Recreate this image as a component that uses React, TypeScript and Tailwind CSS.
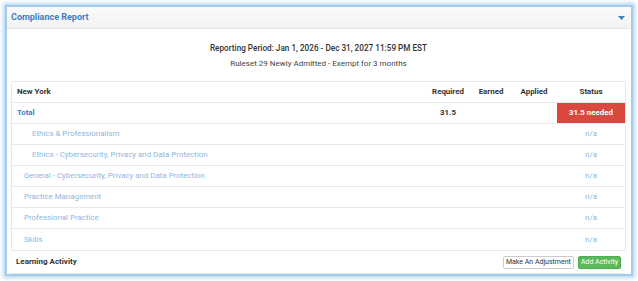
import React from "react";

const rows = [
  { name: "Ethics & Professionalism", indent: 2 },
  { name: "Ethics - Cybersecurity, Privacy and Data Protection", indent: 2 },
  { name: "General - Cybersecurity, Privacy and Data Protection", indent: 1 },
  { name: "Practice Management", indent: 1 },
  { name: "Professional Practice", indent: 1 },
  { name: "Skills", indent: 1 },
];

export default function App() {
  return (
    <div
      className="w-[638px] h-[281px] bg-white p-[5px] overflow-hidden"
      style={{ fontFamily: "Roboto, 'Liberation Sans', sans-serif" }}
    >
      <div className="h-[271px] border-2 border-[#a3cce9] shadow-[0_0_4px_2px_#b7d8ef] bg-white overflow-hidden">
        <div className="h-[22px] flex items-center justify-between px-[4px] bg-gradient-to-b from-[#fbfbfb] to-[#f2f2f2] border-b border-[#e3e3e3]">
          <span className="text-[9px] font-bold text-[#3d7ec4]">Compliance Report</span>
          <svg width="7" height="4" viewBox="0 0 7 4" className="mr-[2px]">
            <path d="M0 0 L7 0 L3.5 4 Z" fill="#3d7ec4" />
          </svg>
        </div>
        <div className="pl-[4px] pr-[5px]">
          <div className="text-center text-[8.2px] font-medium text-[#333] mt-[13px]">
            Reporting Period: Jan 1, 2026 - Dec 31, 2027 11:59 PM EST
          </div>
          <div className="text-center text-[8px] text-[#444] mt-[4px]">
            Ruleset 29 Newly Admitted - Exempt for 3 months
          </div>
          <div className="mt-[11px] border border-[#e8e8e8] rounded-[2px] text-[7.9px]">
            <div className="flex h-[21px] items-center font-bold text-[#333] border-b border-[#e8e8e8]">
              <div className="flex-1 pl-[5px]">New York</div>
              <div className="w-[46px] text-center">Required</div>
              <div className="w-[40px] text-center">Earned</div>
              <div className="w-[46px] text-center">Applied</div>
              <div className="w-[68px] text-center">Status</div>
            </div>
            <div className="flex h-[21px] items-center border-b border-[#e8e8e8]">
              <div className="flex-1 pl-[5px] font-bold text-[#3d7ec4]">Total</div>
              <div className="w-[46px] text-center font-bold text-[#333]">31.5</div>
              <div className="w-[40px]" />
              <div className="w-[46px]" />
              <div className="w-[68px] h-full flex items-center justify-center bg-[#d9473f] text-white font-bold">
                31.5 needed
              </div>
            </div>
            {rows.map((r, i) => (
              <div
                key={r.name}
                className={`flex h-[21px] items-center text-[#8fb5dd] ${i < rows.length - 1 ? "border-b border-[#e8e8e8]" : ""}`}
              >
                <div className={`flex-1 ${r.indent === 2 ? "pl-[20px]" : "pl-[12px]"}`}>{r.name}</div>
                <div className="w-[68px] text-center">n/a</div>
              </div>
            ))}
          </div>
          <div className="flex items-center justify-between h-[22px] pl-[5px] pr-[5px]">
            <span className="text-[8px] font-bold text-[#333]">Learning Activity</span>
            <div className="flex gap-[4px]">
              <button className="h-[13px] px-[2px] text-[7px] text-[#333] bg-white border border-[#ccc] rounded-[2px] leading-none">
                Make An Adjustment
              </button>
              <button className="h-[13px] px-[2px] text-[7px] text-white bg-[#5cb85c] border border-[#4cae4c] rounded-[2px] leading-none">
                Add Activity
              </button>
            </div>
          </div>
          <div className="border border-[#e8e8e8] h-[10px]" />
        </div>
      </div>
    </div>
  );
}
